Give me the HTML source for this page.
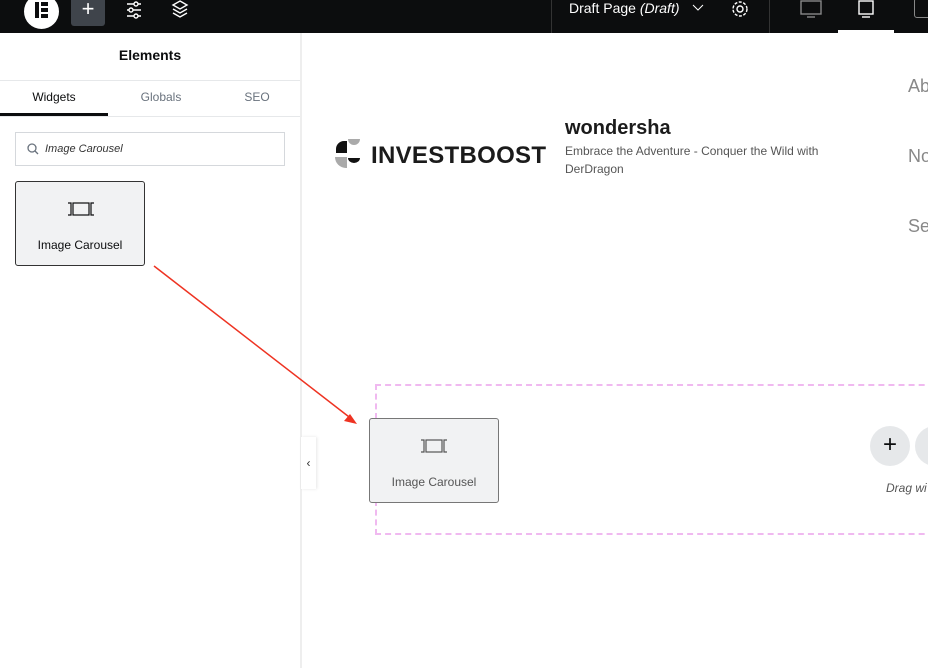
<!DOCTYPE html>
<html><head><style>
*{margin:0;padding:0;box-sizing:border-box}
body{width:928px;height:668px;overflow:hidden;background:#fff;font-family:"Liberation Sans",sans-serif;position:relative}
.top{position:absolute;left:0;top:0;width:928px;height:33px;background:#0c0d0e}
.abs{position:absolute}
</style></head><body>
<div class="top">
  <div class="abs" style="left:24px;top:-6px;width:35px;height:35px;border-radius:50%;background:#fff"></div>
  <div class="abs" style="left:35px;top:2px;width:4px;height:16px;background:#0c0d0e"></div>
  <div class="abs" style="left:41px;top:2px;width:7px;height:4px;background:#0c0d0e"></div>
  <div class="abs" style="left:41px;top:8px;width:7px;height:4px;background:#0c0d0e"></div>
  <div class="abs" style="left:41px;top:14px;width:7px;height:4px;background:#0c0d0e"></div>
  <div class="abs" style="left:71px;top:-4px;width:34px;height:30px;background:#3f444b;border-radius:3px;color:#fff;font-size:22px;text-align:center;line-height:26px">+</div>
  <svg class="abs" style="left:125px;top:0" width="18" height="20" stroke="#fff" fill="none" stroke-width="1.4"><path d="M2 4h14M2 10h14M2 16h14"/><circle cx="11" cy="4" r="2" fill="#0c0d0e"/><circle cx="6" cy="10" r="2" fill="#0c0d0e"/><circle cx="11" cy="16" r="2" fill="#0c0d0e"/></svg>
  <svg class="abs" style="left:171px;top:0" width="18" height="20" stroke="#fff" fill="none" stroke-width="1.4"><path d="M9 1l7 4-7 4-7-4z M2 9l7 4 7-4 M2 13l7 4 7-4"/></svg>
  <div class="abs" style="left:551px;top:0;width:1px;height:33px;background:#333"></div>
  <div class="abs" style="left:569px;top:0;color:#fff;font-size:14px">Draft Page <i>(Draft)</i></div>
  <svg class="abs" style="left:692px;top:4px" width="12" height="8" stroke="#fff" fill="none"><path d="M1 1l5 5 5-5"/></svg>
  <svg class="abs" style="left:731px;top:0" width="18" height="18" stroke="#fff" fill="none" stroke-width="1.4"><circle cx="9" cy="9" r="3"/><circle cx="9" cy="9" r="7" stroke-dasharray="3 1.5"/></svg>
  <div class="abs" style="left:769px;top:0;width:1px;height:33px;background:#333"></div>
  <svg class="abs" style="left:799px;top:0" width="24" height="20" stroke="#888" fill="none" stroke-width="1.4"><rect x="2" y="1" width="20" height="13"/><path d="M8 17h8"/></svg>
  <svg class="abs" style="left:857px;top:0" width="18" height="20" stroke="#fff" fill="none" stroke-width="1.4"><rect x="2" y="1" width="14" height="13"/><path d="M5 17h8"/></svg>
  <div class="abs" style="left:838px;top:30px;width:56px;height:3px;background:#fff"></div>
  <div class="abs" style="left:914px;top:-2px;width:20px;height:20px;border:1.5px solid #888;border-radius:3px"></div>
</div>
<!-- panel -->
<div class="abs" style="left:300px;top:33px;width:2px;height:635px;background:#eee"></div>
<div class="abs" style="left:0;top:47px;width:300px;text-align:center;font-weight:bold;font-size:14px;color:#0c0d0e">Elements</div>
<div class="abs" style="left:0;top:80px;width:300px;height:1px;background:#e6e8ea"></div>
<div class="abs" style="left:0;top:116px;width:300px;height:1px;background:#e6e8ea"></div>
<div class="abs" style="left:0;top:90px;width:108px;text-align:center;font-size:12px;color:#0c0d0e">Widgets</div>
<div class="abs" style="left:108px;top:90px;width:106px;text-align:center;font-size:12px;color:#69727d">Globals</div>
<div class="abs" style="left:214px;top:90px;width:86px;text-align:center;font-size:12px;color:#69727d">SEO</div>
<div class="abs" style="left:0;top:113px;width:108px;height:3px;background:#0c0d0e"></div>
<div class="abs" style="left:15px;top:132px;width:270px;height:34px;border:1px solid #d5d8dc"></div>
<svg class="abs" style="left:26px;top:142px" width="14" height="14" stroke="#69727d" fill="none" stroke-width="1.3"><circle cx="6" cy="6" r="4"/><path d="M9 9l3 3"/></svg>
<div class="abs" style="left:45px;top:143px;font-size:11px;font-style:italic;color:#333">Image Carousel</div>
<div class="abs" style="left:15px;top:181px;width:130px;height:85px;background:#f1f2f3;border:1px solid #333;border-radius:3px"></div>
<svg class="abs" style="left:67px;top:201px" width="28" height="16" stroke="#0c0d0e" fill="none" stroke-width="1.2"><path d="M1 2h3v12H1M27 2h-3v12h3"/><rect x="6" y="2" width="16" height="12"/></svg>
<div class="abs" style="left:15px;top:238px;width:130px;text-align:center;font-size:12px;color:#0c0d0e">Image Carousel</div>
<!-- arrow -->
<svg class="abs" style="left:150px;top:260px" width="220" height="170"><path d="M4 6L203 160" stroke="#ee3322" stroke-width="1.5"/><path d="M207 164l-13-3 6-7z" fill="#ee3322"/></svg>
<!-- collapse tab -->
<div class="abs" style="left:301px;top:437px;width:15px;height:52px;background:#fff;box-shadow:1px 0 3px rgba(0,0,0,.1);font-size:12px;color:#333;line-height:52px;text-align:center">‹</div>
<!-- content -->
<svg class="abs" style="left:334px;top:138px" width="28" height="32">
  <path d="M13 3H10A8 8 0 0 0 2 11V15H13Z" fill="#111"/>
  <path d="M14 1H26A6 6 0 0 1 14 1Z" fill="#aaa"/>
  <path d="M1 19H13V30H12A11 11 0 0 1 1 19Z" fill="#aaa"/>
  <path d="M14 20H26A6 5 0 0 1 14 20Z" fill="#111"/>
</svg>
<div class="abs" style="left:371px;top:142px;font-size:24px;font-weight:bold;color:#1b1b1b;letter-spacing:0.3px">INVESTBOOST</div>
<div class="abs" style="left:565px;top:117px;font-size:20px;font-weight:bold;color:#1b1b1b">wondersha</div>
<div class="abs" style="left:565px;top:142px;font-size:12px;line-height:18px;color:#555;width:290px">Embrace the Adventure - Conquer the Wild with DerDragon</div>
<div class="abs" style="left:908px;top:76px;font-size:18px;color:#888">Ab</div>
<div class="abs" style="left:908px;top:146px;font-size:18px;color:#888">No</div>
<div class="abs" style="left:908px;top:216px;font-size:18px;color:#888">Se</div>
<div class="abs" style="left:375px;top:384px;width:600px;height:151px;border:2px dashed #f0b9f0"></div>
<div class="abs" style="left:369px;top:418px;width:130px;height:85px;background:#f1f2f3;border:1px solid #777;border-radius:3px"></div>
<svg class="abs" style="left:420px;top:438px" width="28" height="16" stroke="#555" fill="none" stroke-width="1.2"><path d="M1 2h3v12H1M27 2h-3v12h3"/><rect x="6" y="2" width="16" height="12"/></svg>
<div class="abs" style="left:369px;top:475px;width:130px;text-align:center;font-size:12px;color:#555">Image Carousel</div>
<div class="abs" style="left:870px;top:426px;width:40px;height:40px;border-radius:50%;background:#e6e8ea;text-align:center;line-height:38px;font-size:24px;color:#0c0d0e">+</div>
<div class="abs" style="left:915px;top:426px;width:40px;height:40px;border-radius:50%;background:#e6e8ea"></div>
<div class="abs" style="left:886px;top:481px;font-size:12px;font-style:italic;color:#555">Drag wi</div>
</body></html>
